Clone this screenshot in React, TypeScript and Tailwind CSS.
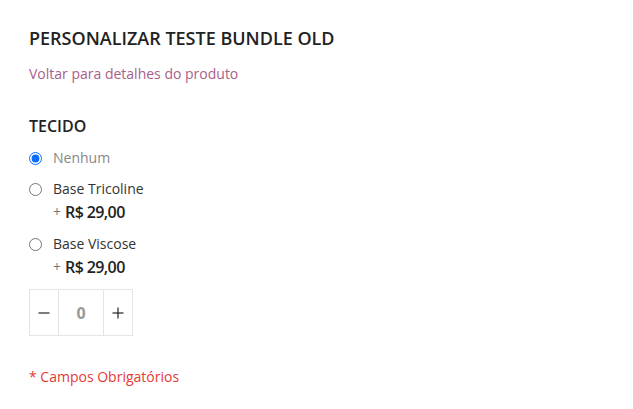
import React from "react";

export default function App() {
  const options = [
    { label: "Nenhum", price: null, checked: true },
    { label: "Base Tricoline", price: "R$ 29,00", checked: false },
    { label: "Base Viscose", price: "R$ 29,00", checked: false },
  ];
  return (
    <div className="min-h-screen bg-white px-[29px] pt-[26px] text-[#333]" style={{ fontFamily: '"Open Sans", sans-serif' }}>
      <h1 className="text-[18px] leading-[24px] font-semibold uppercase text-[#222]">Personalizar Teste Bundle OLD</h1>
      <a className="mt-[14px] block text-[14px] leading-[20px] text-[#a8608a]">Voltar para detalhes do produto</a>
      <h2 className="mt-[31px] text-[16px] leading-[22px] font-semibold uppercase text-[#222]">Tecido</h2>
      <div className="mt-[11px] flex flex-col gap-[11px]">
        {options.map((o) => (
          <div key={o.label}>
            <label className="flex items-center gap-[11px] text-[14px] leading-[20px]">
              <input type="radio" name="tecido" defaultChecked={o.checked} className="m-0 h-[13px] w-[13px] accent-[#0a6cff]" />
              <span className={o.checked ? "text-[#888]" : "text-[#333]"}>{o.label}</span>
            </label>
            {o.price && (
              <div className="mt-[2px] ml-[24px] flex h-[22px] items-center text-[14px] leading-[22px] text-[#777]">
                <span>+</span>
                <span className="ml-[4px] text-[16px] font-semibold tracking-[-0.6px] text-[#222]">{o.price}</span>
              </div>
            )}
          </div>
        ))}
      </div>
      <div className="mt-[11px] flex h-[47px] w-[104px] border border-[#e5e5e5]">
        <button className="flex w-[29px] items-center justify-center border-r border-[#e5e5e5]">
          <svg width="12" height="12" viewBox="0 0 12 12"><line x1="0.5" y1="6" x2="11.5" y2="6" stroke="#222" strokeWidth="1.2" /></svg>
        </button>
        <div className="flex flex-1 items-center justify-center text-[16px] font-bold text-[#999]">0</div>
        <button className="flex w-[29px] items-center justify-center border-l border-[#e5e5e5]">
          <svg width="12" height="12" viewBox="0 0 12 12"><line x1="0.5" y1="6" x2="11.5" y2="6" stroke="#222" strokeWidth="1.2" /><line x1="6" y1="0.5" x2="6" y2="11.5" stroke="#222" strokeWidth="1.2" /></svg>
        </button>
      </div>
      <p className="mt-[31px] text-[14px] leading-[20px] text-[#e53935]">* Campos Obrigatórios</p>
    </div>
  );
}
